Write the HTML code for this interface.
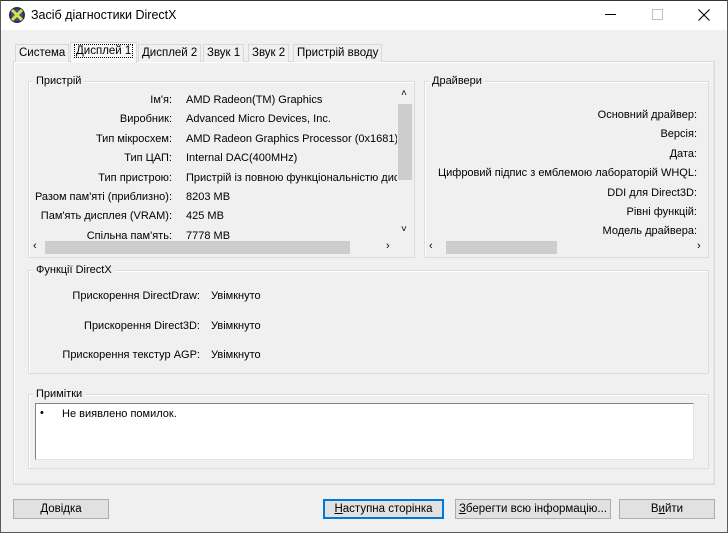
<!DOCTYPE html>
<html><head><meta charset="utf-8"><style>
*{box-sizing:border-box;margin:0;padding:0}
body{width:728px;height:533px;overflow:hidden;background:#f0f0f0;font-family:"Liberation Sans","DejaVu Sans",sans-serif;font-size:11px;color:#000;position:relative}
.a{position:absolute;white-space:nowrap}
.win{position:absolute;left:0;top:0;width:728px;height:533px;border:1px solid #5a5a5a;border-top-color:#333}
.title{position:absolute;left:1px;top:1px;width:726px;height:29px;background:#fff}
.grp{position:absolute;border:1px solid #dcdcdc;box-shadow:inset 1px 1px 0 #fff}
.gl{position:absolute;background:#f0f0f0;padding:0 3px;top:-7px;left:4px}
.tab{position:absolute;top:44px;height:18px;border:1px solid #d9d9d9;border-bottom:none;background:#f0f0f0;padding:2px 3px 0;font-size:11.5px;white-space:nowrap}
.btn{position:absolute;top:499px;height:20px;border:1px solid #adadad;background:#e1e1e1;text-align:center;line-height:18px;font-size:11.5px;white-space:nowrap}
.r{text-align:right}
.sb{position:absolute;background:#f0f0f0}
.th{position:absolute;background:#cdcdcd}
</style></head><body>
<div class="win"></div>
<div class="title"></div>
<svg class="a" style="left:8px;top:6px" width="18" height="18" viewBox="0 0 18 18"><circle cx="9" cy="9" r="8" fill="#2a2f5a"/><circle cx="9" cy="9" r="6" fill="#3a4a8a"/><path d="M4 4 L14 14 M14 4 L4 14" stroke="#d6e63a" stroke-width="3"/></svg>
<div class="a" style="left:31px;top:8px;font-size:12.5px">Засіб діагностики DirectX</div>
<div class="a" style="left:605px;top:14px;width:11px;height:1px;background:#000"></div>
<div class="a" style="left:652px;top:9px;width:11px;height:11px;border:1px solid #c0c0c0"></div>
<svg class="a" style="left:698px;top:9px" width="12" height="12"><path d="M0.5 0.5L11.5 11.5M11.5 0.5L0.5 11.5" stroke="#000" stroke-width="1.1"/></svg>

<div class="a" style="left:13px;top:61px;width:702px;height:424px;border:1px solid #d9d9d9;background:#f9f9f9"></div>
<div class="tab" style="left:15px">Система</div>
<div class="tab" style="left:70px;top:42px;height:21px;background:#f9f9f9;z-index:2"><span style="border:1px dotted #000;padding:0 1px">Дисплей 1</span></div>
<div class="tab" style="left:138px">Дисплей 2</div>
<div class="tab" style="left:203px">Звук 1</div>
<div class="tab" style="left:248px">Звук 2</div>
<div class="tab" style="left:293px">Пристрій вводу</div>
<div class="a" style="left:14px;top:62px;width:700px;height:422px;background:#f0f0f0;border:1px solid #fff;border-right-color:#e5e5e5;border-bottom-color:#e5e5e5"></div>

<div class="grp" style="left:28px;top:81px;width:387px;height:177px"><div class="gl">Пристрій</div></div>
<div class="a r" style="left:30px;width:142px;top:91px;line-height:19.4px">Ім'я:<br>Виробник:<br>Тип мікросхем:<br>Тип ЦАП:<br>Тип пристрою:<br>Разом пам'яті (приблизно):<br>Пам'ять дисплея (VRAM):<br>Спільна пам'ять:</div>
<div class="a" style="left:186px;top:91px;width:211px;overflow:hidden;line-height:19.4px;height:149px">AMD Radeon(TM) Graphics<br>Advanced Micro Devices, Inc.<br>AMD Radeon Graphics Processor (0x1681)<br>Internal DAC(400MHz)<br>Пристрій із повною функціональністю дисплея<br>8203 MB<br>425 MB<br>7778 MB</div>
<div class="sb" style="left:397px;top:88px;width:16px;height:152px"></div>
<div class="th" style="left:398px;top:104px;width:14px;height:76px"></div>
<div class="a" style="left:401px;top:88px;font-size:10px">&#x2C4;</div>
<div class="a" style="left:401px;top:224px;font-size:10px">&#x2C5;</div>
<div class="sb" style="left:30px;top:240px;width:383px;height:15px"></div>
<div class="th" style="left:45px;top:241px;width:305px;height:13px"></div>
<div class="a" style="left:33px;top:240px">&lsaquo;</div>
<div class="a" style="left:386px;top:240px">&rsaquo;</div>

<div class="grp" style="left:424px;top:81px;width:285px;height:177px"><div class="gl">Драйвери</div></div>
<div class="a r" style="left:430px;width:267px;top:106px;line-height:19.4px">Основний драйвер:<br>Версія:<br>Дата:<br>Цифровий підпис з емблемою лабораторій WHQL:<br>DDI для Direct3D:<br>Рівні функцій:<br>Модель драйвера:</div>
<div class="sb" style="left:426px;top:240px;width:281px;height:15px"></div>
<div class="th" style="left:446px;top:241px;width:111px;height:13px"></div>
<div class="a" style="left:429px;top:240px">&lsaquo;</div>
<div class="a" style="left:697px;top:240px">&rsaquo;</div>

<div class="grp" style="left:28px;top:270px;width:681px;height:104px"><div class="gl">Функції DirectX</div></div>
<div class="a r" style="left:30px;width:170px;top:282px;line-height:29.6px">Прискорення DirectDraw:<br>Прискорення Direct3D:<br>Прискорення текстур AGP:</div>
<div class="a" style="left:211px;top:282px;line-height:29.6px">Увімкнуто<br>Увімкнуто<br>Увімкнуто</div>

<div class="grp" style="left:28px;top:394px;width:681px;height:75px"><div class="gl">Примітки</div></div>
<div class="a" style="left:35px;top:403px;width:659px;height:57px;background:#fff;border:1px solid #828282;border-right-color:#e3e3e3;border-bottom-color:#e3e3e3"></div>
<div class="a" style="left:40px;top:407px">&#8226;</div>
<div class="a" style="left:62px;top:408px">Не виявлено помилок.</div>

<div class="btn" style="left:13px;width:96px"><u>Д</u>овідка</div>
<div class="btn" style="left:323px;width:121px;border:1px solid #0078d7;box-shadow:inset 0 0 0 1px #0078d7"><u>Н</u>аступна сторінка</div>
<div class="btn" style="left:455px;width:156px"><u>З</u>берегти всю інформацію...</div>
<div class="btn" style="left:619px;width:96px">В<u>и</u>йти</div>
</body></html>
